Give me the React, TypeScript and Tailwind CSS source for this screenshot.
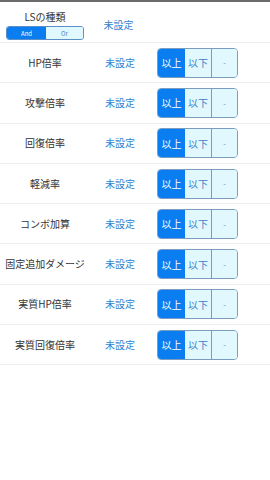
import React from "react";

const rows = ["HP倍率", "攻撃倍率", "回復倍率", "軽減率", "コンボ加算", "固定追加ダメージ", "実質HP倍率", "実質回復倍率"];

export default function App() {
  return (
    <div className="w-[270px] h-[480px] bg-white" style={{ fontFamily: '"Noto Sans CJK JP", "Noto Sans", sans-serif' }}>
      <div className="h-[2px] bg-[#6b6b6b]" />
      <div className="flex items-start h-[41px] border-b border-[#ececec] pt-[9px]">
        <div className="w-[84px] ml-[3px] flex flex-col items-center">
          <div className="text-[10px] leading-[12px] text-[#333] mb-[3px]">LSの種類</div>
          <div className="flex w-[78px] h-[14px] rounded-[3px] border border-[#5a8fc8] overflow-hidden">
            <div className="w-[39px] bg-[#0a7ef0] text-white text-[6px] flex items-center justify-center">And</div>
            <div className="flex-1 bg-[#e2f8ff] text-[#3a7fc8] text-[6px] flex items-center justify-center">Or</div>
          </div>
        </div>
        <div className="w-[63px] text-center text-[10px] leading-[14px] text-[#2f7fd0] mt-[7px]">未設定</div>
      </div>
      {rows.map((r) => (
        <div key={r} className="flex items-center h-[40.3px] border-b border-[#ececec]">
          <div className="w-[90px] text-center text-[10px] text-[#333] -mt-[1px]">{r}</div>
          <div className="w-[60px] text-center text-[10px] text-[#2f7fd0] -mt-[1px]">未設定</div>
          <div className="ml-[7px] flex w-[81px] h-[30px] rounded-[4px] border border-[#7a9cc0] overflow-hidden">
            <div className="w-[27px] bg-[#0a7ef0] text-white text-[10px] flex items-center justify-center">以上</div>
            <div className="w-[27px] bg-[#e2f8ff] text-[#3a7fc8] text-[10px] flex items-center justify-center border-r border-[#7a9cc0]">以下</div>
            <div className="flex-1 bg-[#e2f8ff] text-[#3a7fc8] text-[7px] flex items-center justify-center">-</div>
          </div>
        </div>
      ))}
    </div>
  );
}
